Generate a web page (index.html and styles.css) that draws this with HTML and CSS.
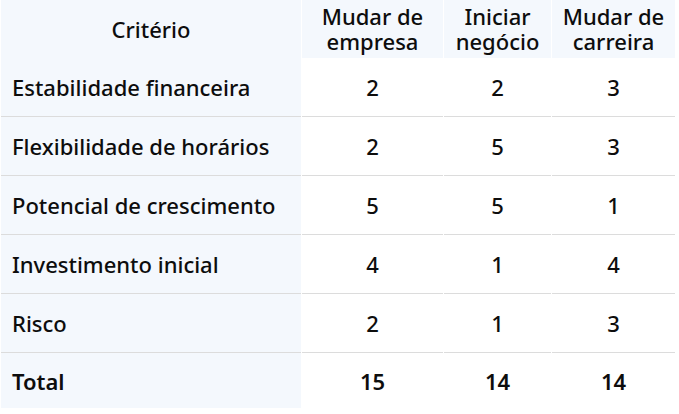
FILE: index.html
```html
<!DOCTYPE html>
<html lang="pt">
<head>
<meta charset="utf-8">
<link rel="stylesheet" href="styles.css">
</head>
<body>
<table class="grid">
  <thead>
    <tr>
      <th class="c1">Critério</th>
      <th class="c2">Mudar de<br>empresa</th>
      <th class="c3">Iniciar<br>negócio</th>
      <th class="c4">Mudar de<br>carreira</th>
    </tr>
  </thead>
  <tbody>
    <tr><td class="label">Estabilidade financeira</td><td>2</td><td>2</td><td>3</td></tr>
    <tr><td class="label">Flexibilidade de horários</td><td>2</td><td>5</td><td>3</td></tr>
    <tr><td class="label">Potencial de crescimento</td><td>5</td><td>5</td><td>1</td></tr>
    <tr><td class="label">Investimento inicial</td><td>4</td><td>1</td><td>4</td></tr>
    <tr><td class="label">Risco</td><td>2</td><td>1</td><td>3</td></tr>
    <tr class="total"><td class="label">Total</td><td>15</td><td>14</td><td>14</td></tr>
  </tbody>
</table>
</body>
</html>
```
FILE: styles.css
```css
html, body {
  margin: 0;
  padding: 0;
  background: #ffffff;
}
body {
  font-family: "Noto Sans", "Open Sans", sans-serif;
  color: #0d0d0d;
}
.grid {
  border-collapse: separate;
  border-spacing: 1px 0;
  table-layout: fixed;
  width: 676px;
  font-size: 22px;
  font-weight: 500;
}
.grid th {
  font-weight: 500;
  background: #f4f8fd;
  line-height: 25px;
  height: 58px;
  padding: 0;
  text-align: center;
  vertical-align: middle;
}
.grid .c1 { width: 300px; }
.grid .c2 { width: 141px; }
.grid .c3 { width: 107px; }
.grid .c4 { width: 123px; }
.grid td {
  height: 58px;
  padding: 0;
  text-align: center;
  border-bottom: 1px solid #dcdcdc;
}
.grid td.label {
  text-align: left;
  background: #f4f8fd;
  padding-left: 11px;
}
.grid tr.total td {
  height: 55px;
  border-bottom: none;
  font-weight: 600;
}
```
